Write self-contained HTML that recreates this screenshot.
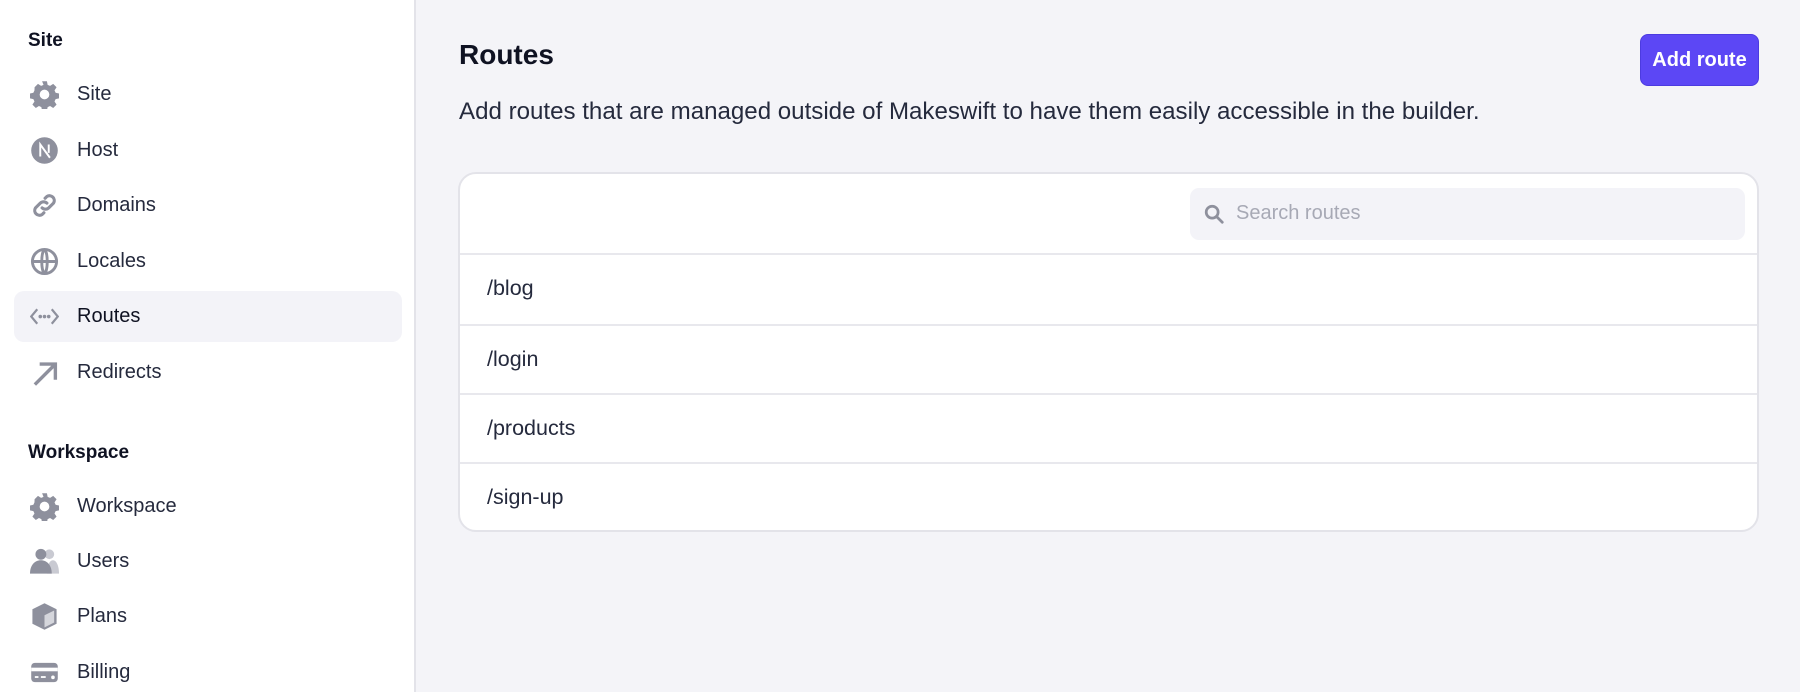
<!DOCTYPE html>
<html><head><style>
*{box-sizing:border-box;margin:0;padding:0}
html,body{width:1800px;height:692px;overflow:hidden}
body{font-family:"Liberation Sans",sans-serif;background:#f4f4f8;color:#252a3d;position:relative}
.side{position:absolute;left:0;top:0;width:416px;height:692px;background:#fff;border-right:2px solid #e3e3e9}
.h{position:absolute;left:28px;font-size:19px;font-weight:bold;color:#0f1222}
.it{position:absolute;left:14px;width:388px;height:51px;border-radius:10px;display:flex;align-items:center;font-size:20px}
.it svg{position:absolute;left:16px;top:11px;width:29px;height:29px}
.it span{position:absolute;left:63px}
.act{background:#f3f3f8}
.title{position:absolute;left:459px;top:39px;font-size:28px;font-weight:bold;color:#0f1222}
.desc{position:absolute;left:459px;top:98px;font-size:24.1px;white-space:nowrap}
.btn{position:absolute;left:1640px;top:34px;width:119px;height:52px;background:#5c47f5;border-radius:8px;color:#fff;font-size:20px;font-weight:bold;display:flex;align-items:center;justify-content:center;border:1px solid #4c3be0}
.card{position:absolute;left:458px;top:172px;width:1301px;height:360px;background:#fff;border:2px solid #e3e3e9;border-radius:18px;overflow:hidden}
.search{position:absolute;left:730px;top:14px;width:555px;height:52px;background:#f3f3f8;border-radius:9px}
.search span{position:absolute;left:46px;top:14px;font-size:20px;color:#a7a9b5}
.row{position:absolute;left:0;width:100%;height:69px;border-top:2px solid #e8e8ed;font-size:21.5px;padding-left:27px;display:flex;align-items:center}
</style></head><body>
<div class="side">
<div class="h" style="top:30px">Site</div>
<div class="it" style="top:69px"><svg viewBox="0 0 24 24"><path fill="#8e909d" d="M10 1h4l.6 3 2 .9 2.6-1.7 2.8 2.8-1.7 2.6.9 2 3 .6v4l-3 .6-.9 2 1.7 2.6-2.8 2.8-2.6-1.7-2 .9-.6 3h-4l-.6-3-2-.9-2.6 1.7-2.8-2.8 1.7-2.6-.9-2-3-.6v-4l3-.6.9-2L3.8 6 6.6 3.2 9.2 4.9l2-.9z"/><circle cx="12" cy="12" r="4" fill="#fff"/></svg><span>Site</span></div>
<div class="it" style="top:125px"><svg viewBox="0 0 24 24"><circle cx="12" cy="12" r="11" fill="#8e909d"/><path d="M8.5 17V7l8 11M15.5 7v7" stroke="#fff" stroke-width="1.6" fill="none"/></svg><span>Host</span></div>
<div class="it" style="top:180px"><svg viewBox="0 0 24 24" fill="none" stroke="#8e909d" stroke-width="2.6" stroke-linecap="round"><path d="M10 14a4 4 0 0 0 5.5 0l4-4a4 4 0 0 0-5.5-5.5l-1.5 1.5"/><path d="M14 10a4 4 0 0 0-5.5 0l-4 4a4 4 0 0 0 5.5 5.5l1.5-1.5"/></svg><span>Domains</span></div>
<div class="it" style="top:236px"><svg viewBox="0 0 24 24" fill="none" stroke="#8e909d" stroke-width="2.4"><circle cx="12" cy="12" r="10"/><path d="M2 12h20M12 2c-3 3-3 17 0 20M12 2c3 3 3 17 0 20"/></svg><span>Locales</span></div>
<div class="it act" style="top:291px"><svg viewBox="0 0 24 24" fill="none" stroke="#8e909d" stroke-width="1.8"><path d="M6 6l-5 6 5 6M18 6l5 6-5 6"/><circle cx="8.5" cy="12" r=".6" fill="#8e909d"/><circle cx="12" cy="12" r=".6" fill="#8e909d"/><circle cx="15.5" cy="12" r=".6" fill="#8e909d"/></svg><span style="color:#0f1222">Routes</span></div>
<div class="it" style="top:347px"><svg viewBox="0 0 24 24" fill="none" stroke="#8e909d" stroke-width="2.8"><path d="M4 22L20 6M8 5h13v13"/></svg><span>Redirects</span></div>
<div class="h" style="top:442px">Workspace</div>
<div class="it" style="top:481px"><svg viewBox="0 0 24 24"><path fill="#8e909d" d="M10 1h4l.6 3 2 .9 2.6-1.7 2.8 2.8-1.7 2.6.9 2 3 .6v4l-3 .6-.9 2 1.7 2.6-2.8 2.8-2.6-1.7-2 .9-.6 3h-4l-.6-3-2-.9-2.6 1.7-2.8-2.8 1.7-2.6-.9-2-3-.6v-4l3-.6.9-2L3.8 6 6.6 3.2 9.2 4.9l2-.9z"/><circle cx="12" cy="12" r="4" fill="#fff"/></svg><span>Workspace</span></div>
<div class="it" style="top:536px"><svg viewBox="0 0 24 24"><circle cx="16" cy="6" r="4" fill="#c9cad2"/><path d="M14 22c0-6 2-11 5-11s5 5 5 11z" fill="#c9cad2"/><circle cx="9" cy="6" r="4.5" fill="#8e909d"/><path d="M0 22c0-7 4-11 9-11s9 4 9 11z" fill="#8e909d"/></svg><span>Users</span></div>
<div class="it" style="top:591px"><svg viewBox="0 0 24 24"><path d="M12 1l10 5v12l-10 5-10-5V6z" fill="#8e909d"/><path d="M12 11l8-4v10l-8 4z" fill="#d5d6dc"/></svg><span>Plans</span></div>
<div class="it" style="top:647px"><svg viewBox="0 0 24 24"><rect x="1" y="4" width="22" height="16" rx="3" fill="#8e909d"/><rect x="1" y="8" width="22" height="3" fill="#fff"/><rect x="4" y="15" width="3" height="1.5" fill="#fff"/><rect x="9" y="15" width="4" height="1.5" fill="#fff"/><circle cx="19" cy="16" r="1.5" fill="#fff"/></svg><span>Billing</span></div>
</div>
<div class="title">Routes</div>
<div class="desc">Add routes that are managed outside of Makeswift to have them easily accessible in the builder.</div>
<div class="btn">Add route</div>
<div class="card">
<div class="search"><svg style="position:absolute;left:13px;top:15px" width="22" height="22" viewBox="0 0 24 24" fill="none" stroke="#8e909d" stroke-width="3"><circle cx="10" cy="10" r="6.5"/><path d="M15 15l6 6" stroke-linecap="round"/></svg><span>Search routes</span></div>
<div class="row" style="top:79px">/blog</div>
<div class="row" style="top:150px">/login</div>
<div class="row" style="top:219px">/products</div>
<div class="row" style="top:288px">/sign-up</div>
</div>
</body></html>
